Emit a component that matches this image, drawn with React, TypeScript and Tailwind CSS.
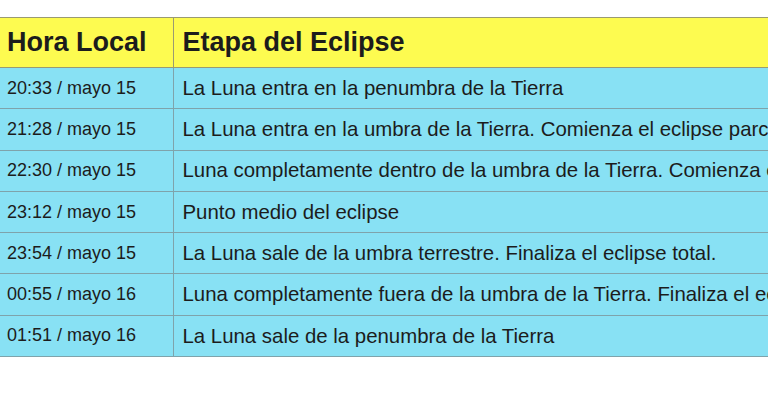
const rows: [string, string][] = [
  ['20:33 / mayo 15', 'La Luna entra en la penumbra de la Tierra'],
  ['21:28 / mayo 15', 'La Luna entra en la umbra de la Tierra. Comienza el eclipse parcial.'],
  ['22:30 / mayo 15', 'Luna completamente dentro de la umbra de la Tierra. Comienza el eclipse total.'],
  ['23:12 / mayo 15', 'Punto medio del eclipse'],
  ['23:54 / mayo 15', 'La Luna sale de la umbra terrestre. Finaliza el eclipse total.'],
  ['00:55 / mayo 16', 'Luna completamente fuera de la umbra de la Tierra. Finaliza el eclipse parcial.'],
  ['01:51 / mayo 16', 'La Luna sale de la penumbra de la Tierra'],
];

export default function App() {
  return (
    <div className="w-[768px] h-[400px] overflow-hidden bg-white pt-[17px] font-['Liberation_Sans',Arial,sans-serif] text-[#1c1c1c]">
      <table className="border-collapse w-[1100px] table-fixed">
        <colgroup>
          <col className="w-[173px]" />
          <col />
        </colgroup>
        <thead>
          <tr className="bg-[#fdfb50] h-[50px]">
            <th className="border border-[#9a9a72] border-l-0 text-left px-[7px] text-[27px] font-bold">
              Hora Local
            </th>
            <th className="border border-[#9a9a72] text-left px-[9px] text-[27px] font-bold">
              Etapa del Eclipse
            </th>
          </tr>
        </thead>
        <tbody>
          {rows.map(([time, stage]) => (
            <tr key={time} className="bg-[#88e1f4] h-[41.3px]">
              <td className="border border-[#7fa3ab] border-l-0 px-[7px] text-[18px] whitespace-nowrap">
                {time}
              </td>
              <td className="border border-[#7fa3ab] px-[9px] text-[20.4px] whitespace-nowrap">
                {stage}
              </td>
            </tr>
          ))}
        </tbody>
      </table>
    </div>
  );
}
